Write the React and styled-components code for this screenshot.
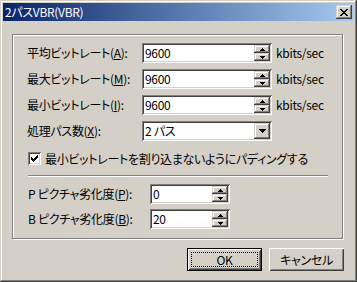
import React from 'react';
import styled, { createGlobalStyle } from 'styled-components';

const Global = createGlobalStyle`
  html, body { margin: 0; padding: 0; background: #d4d0c8; }
  body {
    font-family: "Noto Sans CJK JP", "Liberation Sans", sans-serif;
    font-size: 12px;
    color: #000;
    font-feature-settings: "palt";
    letter-spacing: -0.3px;
  }
  u { text-underline-offset: 1px; }
`;

const raised = `
  box-shadow: inset -1px -1px #404040, inset 1px 1px #d4d0c8,
    inset -2px -2px #808080, inset 2px 2px #fff;
`;
const sunken = `
  box-shadow: inset 1px 1px #808080, inset -1px -1px #fff,
    inset 2px 2px #404040, inset -2px -2px #d4d0c8;
`;

const Window = styled.div`
  width: 357px;
  height: 282px;
  box-sizing: border-box;
  padding: 3px;
  background: #d4d0c8;
  box-shadow: inset -1px -1px #404040, inset 1px 1px #d4d0c8,
    inset -2px -2px #808080, inset 2px 2px #fff;
  display: flex;
  flex-direction: column;
`;

const TitleBar = styled.div`
  height: 18px;
  flex: none;
  display: flex;
  align-items: center;
  justify-content: space-between;
  padding: 0 2px 0 2px;
  background: linear-gradient(to right, #0a246a, #a6caf0);
`;

const Title = styled.span`
  color: #fff;
  font-size: 12px;
  line-height: 18px;
  white-space: nowrap;
`;

const CloseButton = styled.div`
  width: 16px;
  height: 14px;
  background: #d4d0c8;
  ${raised}
  display: flex;
  align-items: center;
  justify-content: center;
  svg { display: block; }
`;

const Body = styled.div`
  display: flex;
  flex-direction: column;
  padding: 13px 10px 0 9px;
`;

const GroupBox = styled.div`
  width: 331px;
  height: 205px;
  box-sizing: border-box;
  border: 1px solid #808080;
  box-shadow: inset 1px 1px #fff, 1px 1px 0 #fff;
  padding: 8px 0 0 14px;
  display: flex;
  flex-direction: column;
`;

const RateGrid = styled.div`
  display: grid;
  grid-template-columns: 111px 130px auto;
  grid-auto-rows: 20px;
  column-gap: 4px;
  row-gap: 6px;
  align-items: center;
`;

const Label = styled.span`
  white-space: nowrap;
  line-height: 14px;
`;

const Unit = styled.span`
  white-space: nowrap;
  line-height: 14px;
`;

const Field = styled.div`
  height: 20px;
  width: ${p => p.$w}px;
  box-sizing: border-box;
  padding: 2px;
  background: #fff;
  ${sunken}
  display: flex;
  align-items: stretch;
`;

const Value = styled.span`
  flex: 1;
  padding-left: 1px;
  line-height: 16px;
  white-space: nowrap;
`;

const Spinner = styled.div`
  width: 16px;
  display: flex;
  flex-direction: column;
`;

const SpinButton = styled.div`
  height: 8px;
  background: #d4d0c8;
  ${raised}
  display: flex;
  align-items: center;
  justify-content: center;
  svg { display: block; }
`;

const DropButton = styled.div`
  width: 16px;
  background: #d4d0c8;
  ${raised}
  display: flex;
  align-items: center;
  justify-content: center;
  svg { display: block; }
`;

const CheckRow = styled.label`
  margin: 11px 0 0 1px;
  height: 13px;
  display: flex;
  align-items: center;
  gap: 4px;
  white-space: nowrap;
`;

const CheckBox = styled.span`
  width: 13px;
  height: 13px;
  flex: none;
  box-sizing: border-box;
  background: #fff;
  ${sunken}
  display: flex;
  align-items: center;
  justify-content: center;
  svg { display: block; }
`;

const Separator = styled.div`
  margin: 10px 0 0 1px;
  width: 300px;
  height: 0;
  border-top: 1px solid #808080;
  border-bottom: 1px solid #fff;
`;

const PictureGrid = styled.div`
  margin: 7px 0 0 1px;
  display: grid;
  grid-template-columns: 122px 80px;
  grid-auto-rows: 20px;
  row-gap: 5px;
  align-items: center;
`;

const ButtonRow = styled.div`
  margin-top: 9px;
  display: flex;
  justify-content: flex-end;
  gap: 7px;
`;

const Button = styled.div`
  width: 75px;
  height: 23px;
  box-sizing: border-box;
  background: #d4d0c8;
  display: flex;
  padding: ${p => (p.$default ? '3px' : '4px')};
  border: ${p => (p.$default ? '1px solid #000' : 'none')};
  box-shadow: inset 1px 1px #fff, inset -1px -1px #404040,
    inset 2px 2px #d4d0c8, inset -2px -2px #808080;
`;

const ButtonFace = styled.span`
  flex: 1;
  display: flex;
  align-items: center;
  justify-content: center;
  border: 1px ${p => (p.$focus ? 'dotted #000' : 'solid transparent')};
  line-height: 14px;
  white-space: nowrap;
`;

const Pixels = ({ rows, color = '#000' }) => {
  const h = rows.length;
  const w = rows[0].length;
  const rects = [];
  rows.forEach((r, y) =>
    r.split('').forEach((c, x) => {
      if (c === 'X') rects.push(<rect key={`${x}-${y}`} x={x} y={y} width="1" height="1" fill={color} />);
    })
  );
  return (
    <svg width={w} height={h} viewBox={`0 0 ${w} ${h}`} shapeRendering="crispEdges">
      {rects}
    </svg>
  );
};

const CLOSE = ['XX....XX', '.XX..XX.', '..XXXX..', '...XX...', '..XXXX..', '.XX..XX.', 'XX....XX'];
const UP = ['..X..', '.XXX.', 'XXXXX'];
const DOWN = ['XXXXX', '.XXX.', '..X..'];
const DROP = ['XXXXXXX', '.XXXXX.', '..XXX..', '...X...'];
const CHECK = ['......X', '.....XX', 'X...XXX', 'XX.XXX.', 'XXXXX..', '.XXX...', '..X....'];

const SpinField = ({ value, width }) => (
  <Field $w={width}>
    <Value>{value}</Value>
    <Spinner>
      <SpinButton><Pixels rows={UP} /></SpinButton>
      <SpinButton><Pixels rows={DOWN} /></SpinButton>
    </Spinner>
  </Field>
);

const rates = [
  { pre: '平均ビットレート(', key: 'A', post: '):' },
  { pre: '最大ビットレート(', key: 'M', post: '):' },
  { pre: '最小ビットレート(', key: 'I', post: '):' },
];

export default function App() {
  return (
    <>
      <Global />
      <Window>
        <TitleBar>
          <Title>2パスVBR(VBR)</Title>
          <CloseButton><Pixels rows={CLOSE} /></CloseButton>
        </TitleBar>
        <Body>
          <GroupBox>
            <RateGrid>
              {rates.map(r => (
                <React.Fragment key={r.key}>
                  <Label>{r.pre}<u>{r.key}</u>{r.post}</Label>
                  <SpinField value="9600" width={130} />
                  <Unit>kbits/sec</Unit>
                </React.Fragment>
              ))}
              <Label>処理パス数(<u>X</u>):</Label>
              <Field $w={130}>
                <Value>2 パス</Value>
                <DropButton><Pixels rows={DROP} /></DropButton>
              </Field>
              <span />
            </RateGrid>
            <CheckRow>
              <CheckBox><Pixels rows={CHECK} /></CheckBox>
              最小ビットレートを割り込まないようにパディングする
            </CheckRow>
            <Separator />
            <PictureGrid>
              <Label>P ピクチャ劣化度(<u>P</u>):</Label>
              <SpinField value="0" width={80} />
              <Label>B ピクチャ劣化度(<u>B</u>):</Label>
              <SpinField value="20" width={80} />
            </PictureGrid>
          </GroupBox>
          <ButtonRow>
            <Button $default><ButtonFace $focus>OK</ButtonFace></Button>
            <Button><ButtonFace>キャンセル</ButtonFace></Button>
          </ButtonRow>
        </Body>
      </Window>
    </>
  );
}
